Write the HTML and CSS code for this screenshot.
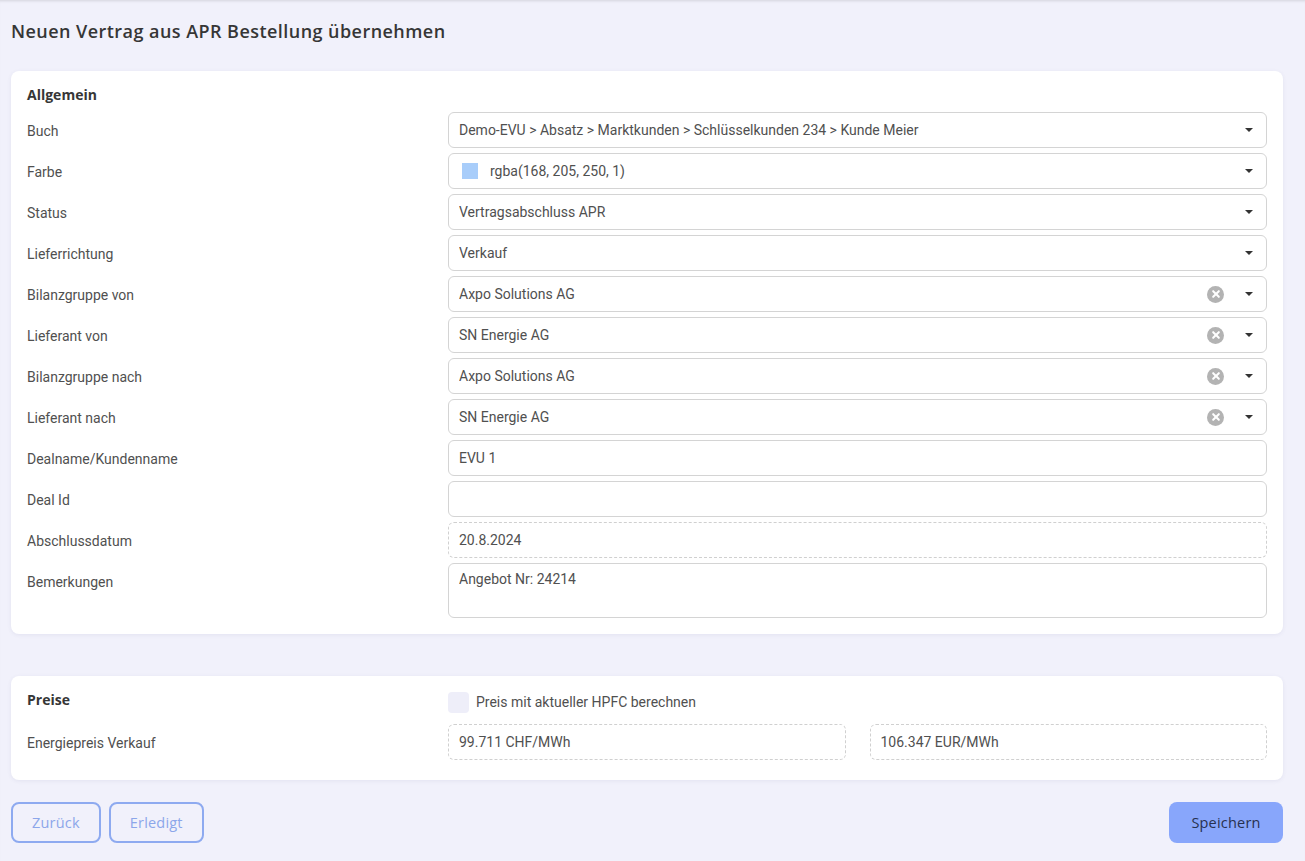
FILE: index.html
```html
<!doctype html>
<html>
  <head>
    <title>Neuen Vertrag aus APR Bestellung übernehmen</title>
    <meta name="viewport" content="width=device-width">
    <link rel="stylesheet" href="styles.css">
  </head>
  <body>
    <div id="page">
      <h1 class="title">Neuen Vertrag aus APR Bestellung übernehmen</h1>

      <div class="card">
        <div class="card-head">Allgemein</div>
        <div class="form">
          <label class="lbl">Buch</label>
          <div class="field select">
            <span class="value">Demo-EVU &gt; Absatz &gt; Marktkunden &gt; Schlüsselkunden 234 &gt; Kunde Meier</span>
            <span class="caret"></span>
          </div>

          <label class="lbl">Farbe</label>
          <div class="field select">
            <span class="swatch"></span>
            <span class="value">rgba(168, 205, 250, 1)</span>
            <span class="caret"></span>
          </div>

          <label class="lbl">Status</label>
          <div class="field select">
            <span class="value">Vertragsabschluss APR</span>
            <span class="caret"></span>
          </div>

          <label class="lbl">Lieferrichtung</label>
          <div class="field select">
            <span class="value">Verkauf</span>
            <span class="caret"></span>
          </div>

          <label class="lbl">Bilanzgruppe von</label>
          <div class="field select">
            <span class="value">Axpo Solutions AG</span>
            <span class="clear"></span>
            <span class="caret"></span>
          </div>

          <label class="lbl">Lieferant von</label>
          <div class="field select">
            <span class="value">SN Energie AG</span>
            <span class="clear"></span>
            <span class="caret"></span>
          </div>

          <label class="lbl">Bilanzgruppe nach</label>
          <div class="field select">
            <span class="value">Axpo Solutions AG</span>
            <span class="clear"></span>
            <span class="caret"></span>
          </div>

          <label class="lbl">Lieferant nach</label>
          <div class="field select">
            <span class="value">SN Energie AG</span>
            <span class="clear"></span>
            <span class="caret"></span>
          </div>

          <label class="lbl">Dealname/Kundenname</label>
          <div class="field"><span class="value">EVU 1</span></div>

          <label class="lbl">Deal Id</label>
          <div class="field"><span class="value"></span></div>

          <label class="lbl">Abschlussdatum</label>
          <div class="field readonly"><span class="value">20.8.2024</span></div>

          <label class="lbl">Bemerkungen</label>
          <div class="field area"><span class="value">Angebot Nr: 24214</span></div>
        </div>
      </div>

      <div class="card prices">
        <div class="form">
          <div class="card-head">Preise</div>
          <div class="check-row">
            <span class="checkbox"></span>
            <span>Preis mit aktueller HPFC berechnen</span>
          </div>

          <label class="lbl">Energiepreis Verkauf</label>
          <div class="pair">
            <div class="field readonly"><span class="value">99.711 CHF/MWh</span></div>
            <div class="field readonly"><span class="value">106.347 EUR/MWh</span></div>
          </div>
        </div>
      </div>

      <div class="actions">
        <button class="btn outline">Zurück</button>
        <button class="btn outline">Erledigt</button>
        <span class="spacer"></span>
        <button class="btn primary">Speichern</button>
      </div>
    </div>
  </body>
</html>
```

FILE: styles.css
```css
html, body {
  height: 100%;
}
body {
  margin: 0;
  background: #f1f1fb;
  font-family: Roboto, "Liberation Sans", sans-serif;
  font-size: 14px;
  color: #505050;
  box-shadow: inset 0 3px 3px -2px rgba(0,0,0,0.12);
}
#page {
  padding: 0 22px 0 11px;
}
.title {
  margin: 0;
  padding: 20px 0 0;
  height: 71px;
  box-sizing: border-box;
  font-family: "Open Sans", "Liberation Sans", sans-serif;
  font-size: 18px;
  font-weight: 600;
  line-height: 22px;
  color: #363636;
  letter-spacing: 0.45px;
}
.card {
  background: #fff;
  border-radius: 8px;
  box-shadow: 0 1px 4px rgba(60,60,110,0.08);
  padding: 14px 16px 16px;
}
.card-head {
  font-family: "Open Sans", "Liberation Sans", sans-serif;
  font-weight: 700;
  font-size: 14px;
  line-height: 20px;
  color: #363636;
  margin-bottom: 7px;
}
.form {
  display: grid;
  grid-template-columns: 421px 1fr;
  row-gap: 5px;
}
.form > .card-head {
  margin-bottom: 0;
}
.lbl {
  line-height: 20px;
  padding-top: 9px;
  color: #505050;
}
.field {
  display: flex;
  align-items: center;
  height: 36px;
  box-sizing: border-box;
  border: 1px solid #d4d4d4;
  border-radius: 6px;
  padding: 0 10px;
  color: #505050;
  background: #fff;
}
.field .value {
  flex: 1;
  white-space: nowrap;
  overflow: hidden;
}
.field.readonly {
  border: 1px dashed #d0d0d0;
}
.field.area {
  height: 55px;
  align-items: flex-start;
  padding-top: 7px;
}
.swatch {
  width: 16px;
  height: 16px;
  background: rgba(168, 205, 250, 1);
  margin: 0 12px 0 3px;
}
.caret {
  width: 0;
  height: 0;
  border-left: 4px solid transparent;
  border-right: 4px solid transparent;
  border-top: 4px solid #333;
  margin: 0 3px 0 0;
}
.clear {
  position: relative;
  width: 17px;
  height: 17px;
  border-radius: 50%;
  background: #b3b3b3;
  margin-right: 21px;
}
.clear::before,
.clear::after {
  content: "";
  position: absolute;
  left: 3.5px;
  top: 7.5px;
  width: 10px;
  height: 2px;
  background: #fff;
  border-radius: 1px;
  transform: rotate(45deg);
}
.clear::after {
  transform: rotate(-45deg);
}

.prices {
  margin-top: 42px;
  padding-bottom: 20px;
}
.check-row {
  display: flex;
  align-items: center;
  height: 30px;
  margin-top: -3px;
  margin-bottom: 2px;
}
.checkbox {
  width: 21px;
  height: 21px;
  border-radius: 4px;
  background: #eeeef9;
  margin-right: 7px;
}
.pair {
  display: grid;
  grid-template-columns: 1fr 1fr;
  column-gap: 24px;
}

.actions {
  display: flex;
  gap: 8px;
  margin-top: 22px;
}
.spacer {
  flex: 1;
}
.btn {
  height: 41px;
  border-radius: 8px;
  font-family: "Open Sans", "Liberation Sans", sans-serif;
  font-size: 14.5px;
  letter-spacing: 0.2px;
  padding: 0 19px;
  cursor: pointer;
}
.btn.outline {
  background: transparent;
  border: 2px solid #8eaaf0;
  color: #8ca6ea;
}
.btn.primary {
  background: #88a6fb;
  border: none;
  color: #27314f;
  width: 114px;
  padding: 0;
}
```
